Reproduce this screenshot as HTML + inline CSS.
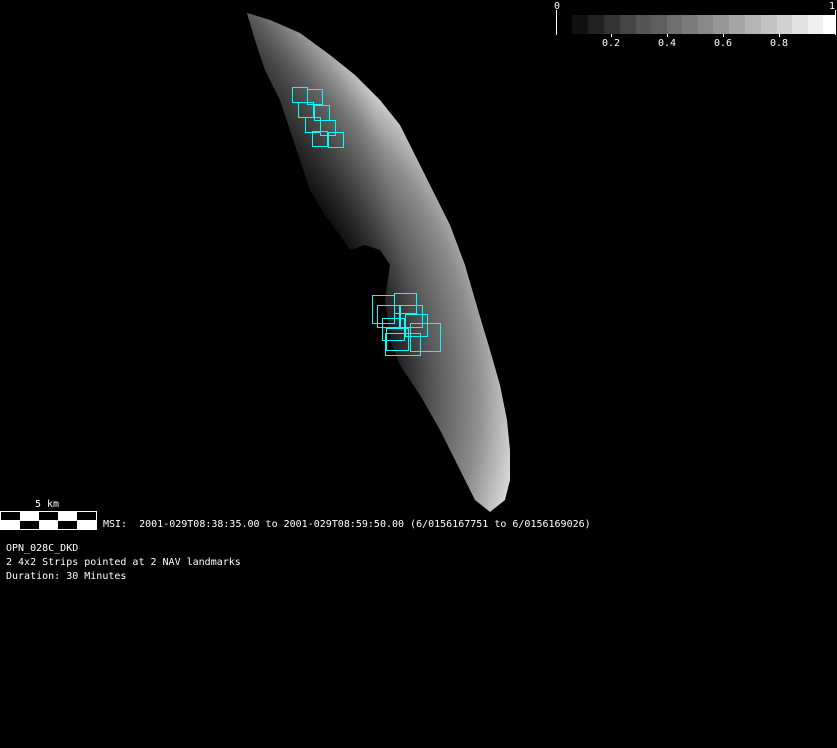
<!DOCTYPE html>
<html><head><meta charset="utf-8"><style>
html,body{margin:0;padding:0;background:#000;width:837px;height:748px;overflow:hidden}
.t{position:absolute;color:#fff;font-family:"DejaVu Sans Mono","Liberation Mono",monospace;font-size:10px;line-height:14px;white-space:pre}
</style></head><body>
<svg width="837" height="748" style="position:absolute;left:0;top:0">
<defs>
<radialGradient id="g" gradientUnits="userSpaceOnUse" cx="100" cy="400" r="420">
<stop offset="0.68" stop-color="#111"/>
<stop offset="0.8" stop-color="#5a5a5a"/>
<stop offset="0.9" stop-color="#8e8e8e"/>
<stop offset="0.99" stop-color="#d5d5d5"/>
</radialGradient>
<linearGradient id="d" gradientUnits="userSpaceOnUse" x1="250" y1="40" x2="360" y2="20">
<stop offset="0" stop-color="#000" stop-opacity="0.6"/>
<stop offset="1" stop-color="#000" stop-opacity="0"/>
</linearGradient>
</defs>
<polygon fill="url(#g)" points="247,13 270,20 300,33 330,55 355,75 380,100 400,125 415,155 430,185 450,225 465,265 478,310 490,350 500,385 507,420 510,450 510,480 505,500 490,512 475,500 460,470 440,430 420,395 400,365 390,340 385,300 390,265 380,250 365,245 350,250 340,235 325,215 310,190 300,160 290,130 280,100 265,70 255,40"/>
<polygon fill="url(#d)" points="247,13 270,20 300,33 330,55 355,75 380,100 400,125 415,155 430,185 450,225 465,265 478,310 490,350 500,385 507,420 510,450 510,480 505,500 490,512 475,500 460,470 440,430 420,395 400,365 390,340 385,300 390,265 380,250 365,245 350,250 340,235 325,215 310,190 300,160 290,130 280,100 265,70 255,40"/>
<g fill="none" stroke="#00ffff" stroke-width="1">
<rect x="292.5" y="87.5" width="15" height="15"/><rect x="307.5" y="89.5" width="15" height="15"/>
<rect x="298.5" y="102.5" width="15" height="15"/><rect x="314.5" y="105.5" width="15" height="15"/>
<rect x="305.5" y="117.5" width="15" height="15"/><rect x="320.5" y="120.5" width="15" height="15"/>
<rect x="312.5" y="131.5" width="15" height="15"/><rect x="328.5" y="132.5" width="15" height="15"/>
<rect x="372.5" y="295.5" width="22" height="28"/><rect x="394.5" y="293.5" width="22" height="20"/>
<rect x="377.5" y="305.5" width="22" height="22"/><rect x="400.5" y="305.5" width="22" height="22"/>
<rect x="382.5" y="318.5" width="22" height="22"/><rect x="405.5" y="314.5" width="22" height="22"/>
<rect x="386.5" y="328.5" width="22" height="22"/><rect x="410.5" y="323.5" width="30" height="28"/>
<rect x="385.5" y="333.5" width="35" height="22"/>
</g>
<g>
<rect x="572" y="15" width="16" height="19" fill="#111"/><rect x="588" y="15" width="16" height="19" fill="#222"/>
<rect x="604" y="15" width="16" height="19" fill="#333"/><rect x="620" y="15" width="16" height="19" fill="#444"/>
<rect x="636" y="15" width="15" height="19" fill="#555"/><rect x="651" y="15" width="16" height="19" fill="#5f5f5f"/>
<rect x="667" y="15" width="15" height="19" fill="#6e6e6e"/><rect x="682" y="15" width="16" height="19" fill="#7b7b7b"/>
<rect x="698" y="15" width="15" height="19" fill="#888"/><rect x="713" y="15" width="16" height="19" fill="#979797"/>
<rect x="729" y="15" width="16" height="19" fill="#a5a5a5"/><rect x="745" y="15" width="16" height="19" fill="#b4b4b4"/>
<rect x="761" y="15" width="16" height="19" fill="#c3c3c3"/><rect x="777" y="15" width="15" height="19" fill="#d2d2d2"/>
<rect x="792" y="15" width="16" height="19" fill="#e1e1e1"/><rect x="808" y="15" width="15" height="19" fill="#efefef"/>
<rect x="823" y="15" width="13" height="19" fill="#fff"/>
</g>
<g stroke="#fff" stroke-width="1">
<line x1="556.5" y1="10" x2="556.5" y2="35"/><line x1="835.5" y1="10" x2="835.5" y2="35"/>
<line x1="611.5" y1="34" x2="611.5" y2="37"/><line x1="667.5" y1="34" x2="667.5" y2="37"/>
<line x1="723.5" y1="34" x2="723.5" y2="37"/><line x1="779.5" y1="34" x2="779.5" y2="37"/>
</g>
<rect x="0.5" y="511.5" width="96" height="18" fill="#fff" stroke="#fff"/>
<g fill="#000">
<rect x="1" y="512" width="19" height="8"/><rect x="39" y="512" width="19" height="8"/><rect x="77" y="512" width="19" height="8"/>
<rect x="20" y="521" width="19" height="8"/><rect x="58" y="521" width="19" height="8"/>
</g>
</svg>
<div class="t" style="left:554px;top:0px">0</div>
<div class="t" style="left:829px;top:0px">1</div>
<div class="t" style="left:602px;top:37px">0.2</div>
<div class="t" style="left:658px;top:37px">0.4</div>
<div class="t" style="left:714px;top:37px">0.6</div>
<div class="t" style="left:770px;top:37px">0.8</div>
<div class="t" style="left:35px;top:498px">5 km</div>
<div class="t" style="left:103px;top:518px">MSI:  2001-029T08:38:35.00 to 2001-029T08:59:50.00 (6/0156167751 to 6/0156169026)</div>
<div class="t" style="left:6px;top:542px">OPN_028C_DKD
2 4x2 Strips pointed at 2 NAV landmarks
Duration: 30 Minutes</div>
</body></html>
